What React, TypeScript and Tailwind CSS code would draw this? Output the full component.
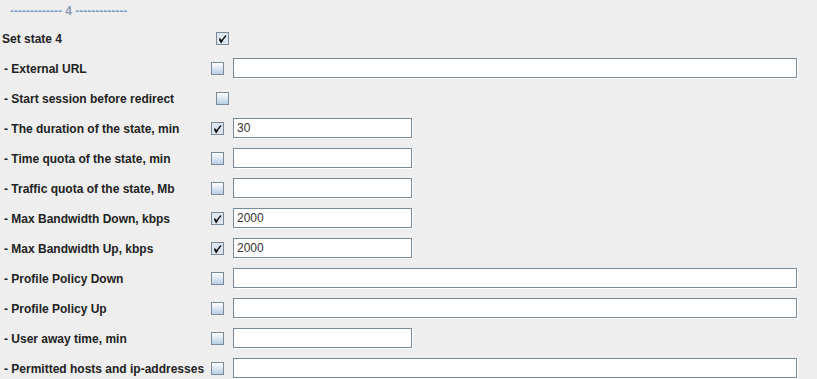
import React from "react";

type Row = {
  label: string;
  checked: boolean;
  field?: "wide" | "narrow";
  value?: string;
  boxShift?: boolean;
};

const rows: Row[] = [
  { label: "Set state 4", checked: true, boxShift: true },
  { label: "- External URL", checked: false, field: "wide" },
  { label: "- Start session before redirect", checked: false, boxShift: true },
  { label: "- The duration of the state, min", checked: true, field: "narrow", value: "30" },
  { label: "- Time quota of the state, min", checked: false, field: "narrow" },
  { label: "- Traffic quota of the state, Mb", checked: false, field: "narrow" },
  { label: "- Max Bandwidth Down, kbps", checked: true, field: "narrow", value: "2000" },
  { label: "- Max Bandwidth Up, kbps", checked: true, field: "narrow", value: "2000" },
  { label: "- Profile Policy Down", checked: false, field: "wide" },
  { label: "- Profile Policy Up", checked: false, field: "wide" },
  { label: "- User away time, min", checked: false, field: "narrow" },
  { label: "- Permitted hosts and ip-addresses", checked: false, field: "wide" },
];

function CheckBox({ checked }: { checked: boolean }) {
  if (checked) {
    return (
      <div className="w-[13px] h-[13px] border border-[#7a8a99] bg-[#dde6ef] flex items-center justify-center shrink-0">
        <svg width="11" height="11" viewBox="0 0 11 11">
          <path d="M2.5 5.5 L4.2 8.5 L9 2.5" fill="none" stroke="#111" strokeWidth="1.3" />
          <path d="M2.8 6.2 L4.2 8.5 L5 7.2" fill="none" stroke="#111" strokeWidth="2.2" />
        </svg>
      </div>
    );
  }
  return (
    <div className="w-[13px] h-[13px] border border-[#7a8a99] bg-gradient-to-b from-[#ffffff] to-[#b8cfe5] shrink-0" />
  );
}

function Field({ kind, value }: { kind: "wide" | "narrow"; value?: string }) {
  return (
    <div
      className={`${kind === "wide" ? "w-[564px]" : "w-[179px]"} h-[20px] border border-[#7a8a99] bg-white shadow-[1px_1px_0_#ffffff] flex items-center pl-[3px] text-[12px] text-[#333333] font-normal`}
    >
      {value}
    </div>
  );
}

export default function App() {
  return (
    <div
      className="w-[817px] h-[379px] bg-[#eeeeee] overflow-hidden"
      style={{ fontFamily: '"Liberation Sans", Arial, sans-serif' }}
    >
      <div className="h-[23px] pl-[10px] pt-[4px] text-[12px] font-bold text-[#7d9dc6] leading-[14px]">
        ------------- <span className="text-[#8b9bb0]">4</span> -------------
      </div>
      {rows.map((r, i) => (
        <div key={i} className="h-[30px] flex items-center">
          <div
            className={`w-[211px] shrink-0 text-[12px] font-bold text-[#222222] whitespace-nowrap pt-[1px] ${
              i === 0 ? "pl-[2px]" : "pl-[4px]"
            }`}
          >
            {r.label}
          </div>
          <div className={r.boxShift ? "ml-[5px]" : ""}>
            <CheckBox checked={r.checked} />
          </div>
          {r.field && (
            <div className="ml-[9px]">
              <Field kind={r.field} value={r.value} />
            </div>
          )}
        </div>
      ))}
    </div>
  );
}
